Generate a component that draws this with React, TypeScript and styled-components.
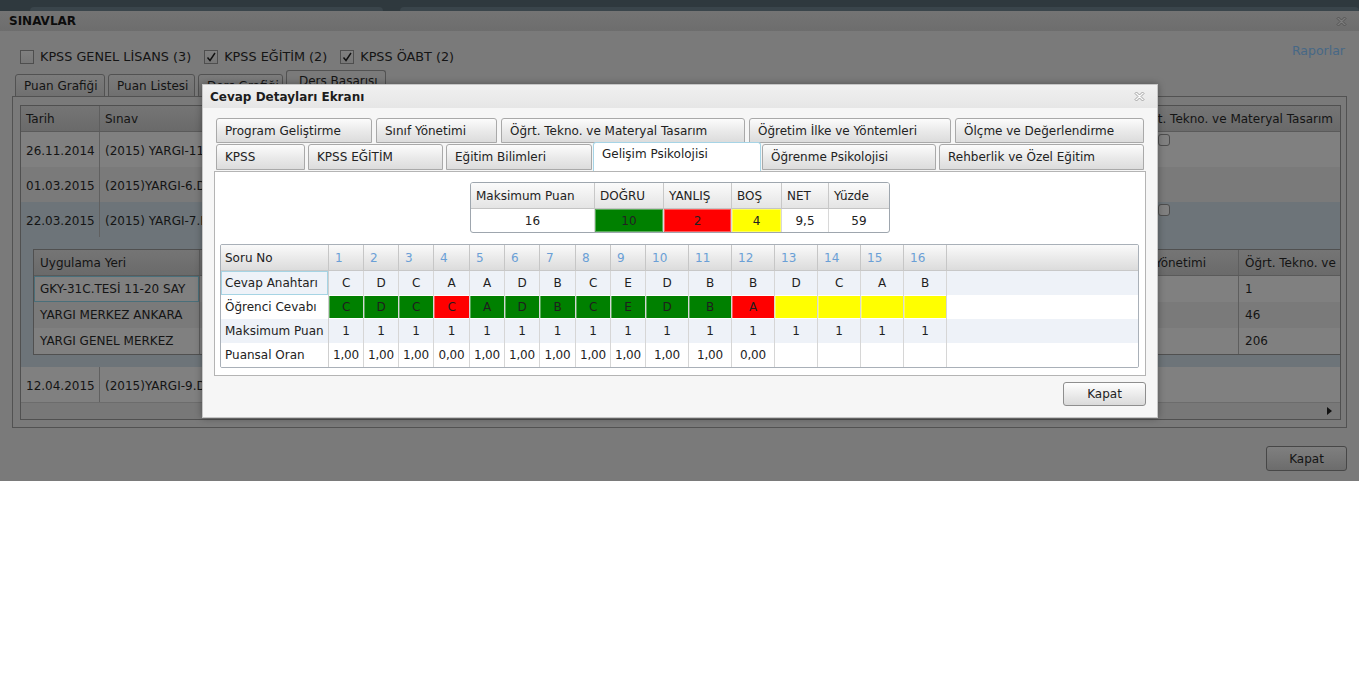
import React from "react";
import styled, { createGlobalStyle, css } from "styled-components";

const GlobalStyle = createGlobalStyle`
  * { box-sizing: border-box; }
  html, body { margin: 0; padding: 0; background: #fff; }
  body {
    font-family: "DejaVu Sans", Verdana, sans-serif;
    font-size: 12px;
    color: #222;
  }
`;

// colours of the page while it is dimmed behind the modal dialog
const dim = {
  strip: "#2f393e",
  stripPiece: "#3a454b",
  window: "#7a7a7a",
  text: "#141414",
  border: "#525252",
  line: "#606060",
  headTop: "#757575",
  headBottom: "#6a6a6a",
  row: "#808080",
  rowAlt: "#7a7a7a",
  rowSel: "#6d7479",
  link: "#476886",
  focus: "#4a6f7a",
};

// ---------- shared bits ----------

const XIcon = ({ dimmed }: { dimmed?: boolean }) => (
  <svg width="11" height="11" viewBox="0 0 11 11">
    <path
      d="M1 2.5 L2.5 1 L5.5 4 L8.5 1 L10 2.5 L7 5.5 L10 8.5 L8.5 10 L5.5 7 L2.5 10 L1 8.5 L4 5.5 Z"
      fill={dimmed ? "#7c7c7c" : "#fafafa"}
      stroke={dimmed ? "#555" : "#a2a2a2"}
      strokeWidth="1"
    />
  </svg>
);

const Button = styled.button<{ $dim?: boolean }>`
  width: ${(p) => (p.$dim ? 81 : 83)}px;
  height: ${(p) => (p.$dim ? 25 : 24)}px;
  padding: 0;
  border: 1px solid ${(p) => (p.$dim ? "#474747" : "#8e8e8e")};
  border-radius: 3px;
  background: ${(p) =>
    p.$dim
      ? "linear-gradient(#7f7f7f, #767676 50%, #6c6c6c)"
      : "linear-gradient(#fefefe, #ececec 50%, #dadada)"};
  font: 12px "DejaVu Sans", Verdana, sans-serif;
  color: ${(p) => (p.$dim ? dim.text : "#222")};
`;

// ---------- page behind the dialog ----------

const Screen = styled.div`
  position: relative;
  height: 481px;
  background: ${dim.strip};
  overflow: hidden;
`;

const TopStrip = styled.div`
  height: 11px;
  display: flex;
  align-items: flex-end;
  gap: 17px;
  padding-left: 30px;
`;

const TopPiece = styled.div<{ $grow?: boolean }>`
  height: 4px;
  width: 353px;
  ${(p) => p.$grow && "flex: 1;"}
  border-radius: 6px 6px 0 0;
  background: ${dim.stripPiece};
`;

const Window = styled.section`
  height: 470px;
  background: ${dim.window};
  color: ${dim.text};
  display: flex;
  flex-direction: column;
`;

const WindowHeader = styled.header`
  height: 20px;
  flex: none;
  display: flex;
  align-items: center;
  justify-content: space-between;
  padding: 0 12px 0 9px;
  background: linear-gradient(#747474, #6d6d6d);
  font-weight: bold;
  color: #0c0c0c;
`;

const FilterRow = styled.div`
  height: 40px;
  flex: none;
  display: flex;
  justify-content: space-between;
  align-items: flex-start;
  padding: 0 14px 0 20px;
`;

const FilterGroup = styled.div`
  margin-top: 18px;
  display: flex;
  align-items: center;
  gap: 13px;
`;

const FilterItem = styled.label`
  display: flex;
  align-items: center;
  gap: 6px;
  font-size: 12.8px;
`;

const Box = styled.span`
  width: 14px;
  height: 14px;
  border: 1px solid #4e4e4e;
  background: linear-gradient(#808080, #777);
  display: flex;
  align-items: center;
  justify-content: center;
`;

const ReportLink = styled.a`
  margin-top: 12px;
  color: ${dim.link};
  text-decoration: none;
  font-size: 12.5px;
`;

const Check = ({ on }: { on?: boolean }) => (
  <Box>
    {on && (
      <svg width="12" height="12" viewBox="0 0 12 12">
        <path d="M2.5 6.5 L5 9.5 L10 2" fill="none" stroke="#111" strokeWidth="1.4" />
      </svg>
    )}
  </Box>
);

const BgTabBar = styled.div`
  height: 26px;
  flex: none;
  display: flex;
  align-items: flex-end;
  gap: 3px;
  padding-left: 15px;
  margin-bottom: -1px;
  position: relative;
  z-index: 1;
`;

const BgTab = styled.div<{ $w: number; $active?: boolean }>`
  width: ${(p) => p.$w}px;
  height: ${(p) => (p.$active ? 27 : 23)}px;
  display: flex;
  align-items: ${(p) => (p.$active ? "flex-start" : "center")};
  padding: ${(p) => (p.$active ? "3px 0 0 12px" : "0 0 0 8px")};
  border: 1px solid ${dim.border};
  border-bottom: ${(p) => (p.$active ? "none" : `1px solid ${dim.border}`)};
  border-radius: 3px 3px 0 0;
  background: ${(p) => (p.$active ? dim.window : "linear-gradient(#7c7c7c, #707070)")};
  white-space: nowrap;
`;

const BgPanel = styled.div`
  height: 332px;
  flex: none;
  margin: 0 12px;
  border: 1px solid ${dim.border};
  padding: 8px 5px 7px 7px;
`;

const MainGrid = styled.div`
  height: 100%;
  border: 1px solid #505050;
  background: ${dim.row};
  overflow: hidden;
  display: flex;
  flex-direction: column;
`;

const mainCols = "79px 1fr 188px";

const MainHead = styled.div`
  height: 26px;
  flex: none;
  display: grid;
  grid-template-columns: ${mainCols};
  background: linear-gradient(${dim.headTop}, ${dim.headBottom});
  border-bottom: 1px solid #5a5a5a;
`;

const HeadCell = styled.div<{ $end?: boolean }>`
  display: flex;
  align-items: center;
  justify-content: ${(p) => (p.$end ? "flex-end" : "flex-start")};
  padding: ${(p) => (p.$end ? "0 7px 0 0" : "0 0 0 5px")};
  border-right: 1px solid #5e5e5e;
  white-space: nowrap;
  overflow: hidden;
  &:last-child { border-right: none; }
`;

const MainRow = styled.div<{ $bg: string }>`
  height: 35px;
  flex: none;
  display: grid;
  grid-template-columns: ${mainCols};
  background: ${(p) => p.$bg};
`;

const RowCell = styled.div<{ $top?: boolean }>`
  display: flex;
  align-items: ${(p) => (p.$top ? "flex-start" : "center")};
  padding: ${(p) => (p.$top ? "2px 0 0 6px" : "2px 0 0 5px")};
  white-space: nowrap;
  overflow: hidden;
  &:first-child { border-right: 1px solid ${dim.line}; }
`;

const RoundBox = styled.span`
  width: 12px;
  height: 12px;
  border: 1px solid #4d4d4d;
  border-radius: 3px;
  background: #808080;
`;

const DetailArea = styled.div`
  flex: none;
  height: 130px;
  padding: 12px 0 0 12px;
  background: ${dim.rowSel};
`;

const detailCols = "166px 919px 120px 125px";

const DetailGrid = styled.div`
  width: 1330px;
  border: 1px solid #505050;
  background: ${dim.row};
`;

const DetailHead = styled.div`
  height: 26px;
  display: grid;
  grid-template-columns: ${detailCols};
  background: linear-gradient(${dim.headTop}, ${dim.headBottom});
  border-bottom: 1px solid #5a5a5a;
`;

const DetailRow = styled.div<{ $bg: string }>`
  height: 26px;
  display: grid;
  grid-template-columns: ${detailCols};
  background: ${(p) => p.$bg};
`;

const DetailCell = styled.div<{ $focus?: boolean }>`
  display: flex;
  align-items: center;
  padding-left: 6px;
  white-space: nowrap;
  overflow: hidden;
  border-right: 1px solid #5e5e5e;
  ${(p) => p.$focus && `box-shadow: inset 0 0 0 1px ${dim.focus};`}
  &:nth-child(2) { border-right: none; }
`;

const HScroll = styled.div`
  margin-top: auto;
  height: 17px;
  flex: none;
  background: #787878;
  border-top: 1px solid #6c6c6c;
  display: flex;
  align-items: center;
  justify-content: flex-end;
  padding-right: 8px;
`;

const ArrowRight = styled.span`
  width: 0;
  height: 0;
  border-top: 4px solid transparent;
  border-bottom: 4px solid transparent;
  border-left: 5px solid #111;
`;

const WindowFooter = styled.div`
  display: flex;
  justify-content: flex-end;
  padding: 18px 12px 0 0;
`;

// ---------- dialog ----------

const Dialog = styled.div`
  position: absolute;
  left: 202px;
  top: 84px;
  z-index: 11;
  width: 956px;
  background: #f6f6f6;
  border: 1px solid #c6c6c6;
  box-shadow: 0 0 7px rgba(0, 0, 0, 0.35);
`;

const DialogHeader = styled.header`
  height: 23px;
  display: flex;
  align-items: center;
  justify-content: space-between;
  padding: 0 12px 0 7px;
  background: linear-gradient(#f0f0f0, #e6e6e6);
  font-weight: bold;
  color: #1c1c1c;
`;

const DialogBody = styled.div`
  padding: 10px 11px 11px 11px;
`;

const TabRow = styled.div<{ $h: number; $gap: number }>`
  height: ${(p) => p.$h}px;
  display: flex;
  align-items: flex-end;
  gap: ${(p) => p.$gap}px;
  padding-left: 2px;
  margin-bottom: 1px;
  &:last-of-type { margin-bottom: 0; }
`;

const Tab = styled.div<{ $w: number; $active?: boolean }>`
  width: ${(p) => p.$w}px;
  height: 100%;
  flex: none;
  display: flex;
  align-items: center;
  padding-left: 8px;
  border: 1px solid #a9a9a9;
  border-radius: 3px 3px 0 0;
  background: linear-gradient(#fcfcfc, #e9e9e9 55%, #dcdcdc);
  color: #222;
  white-space: nowrap;
  ${(p) =>
    p.$active &&
    css`
      height: 29px;
      margin: 0 -2px -1px -2px;
      align-items: flex-start;
      padding-top: 4px;
      background: #fff;
      border-color: #a6d4e6;
      border-bottom: none;
      position: relative;
      z-index: 2;
    `}
`;

const TabPanel = styled.div`
  height: 205px;
  background: #fff;
  border: 1px solid #b4b4b4;
  display: flex;
  flex-direction: column;
  align-items: center;
`;

const SummaryTable = styled.div`
  margin-top: 10px;
  display: grid;
  grid-template-columns: 124px 69px 68px 50px 47px 60px;
  grid-template-rows: 26px 23px;
  border: 1px solid #9ea6ae;
  border-radius: 3px;
  overflow: hidden;
`;

const SumHead = styled.div`
  display: flex;
  align-items: center;
  padding-left: 5px;
  background: linear-gradient(#fbfbfb, #e4e4e4);
  border-right: 1px solid #c8c8c8;
  border-bottom: 1px solid #c4c4c4;
  &:nth-child(6) { border-right: none; }
`;

type Tone = "green" | "red" | "yellow" | undefined;
const toneBg = (t: Tone) =>
  t === "green" ? "#008000" : t === "red" ? "#ff0000" : t === "yellow" ? "#ffff00" : "transparent";

const SumCell = styled.div<{ $tone?: Tone }>`
  display: flex;
  align-items: center;
  justify-content: center;
  background: ${(p) => toneBg(p.$tone)};
  border-right: 1px solid #d8d8d8;
  ${(p) => p.$tone && "box-shadow: inset 0 0 0 1px rgba(255,255,255,0.35);"}
  &:last-child { border-right: none; }
`;

const answerCols =
  "108px 35px 35px 35px 36px 35px 35px 36px 35px 35px 43px 43px 43px 43px 43px 43px 43px 1fr";

const AnswerGrid = styled.div`
  align-self: stretch;
  margin: 11px 6px 0 5px;
  border: 1px solid #a9b0b8;
  border-radius: 2px;
  overflow: hidden;
`;

const AnswerHead = styled.div`
  height: 26px;
  display: grid;
  grid-template-columns: ${answerCols};
  background: linear-gradient(#fafafa, #e9e9e9 55%, #dcdcdc);
  border-bottom: 1px solid #c8c8c8;
`;

const AHeadCell = styled.div<{ $num?: boolean }>`
  display: flex;
  align-items: center;
  padding-left: ${(p) => (p.$num ? 6 : 4)}px;
  color: ${(p) => (p.$num ? "#6a9fd6" : "#222")};
  border-right: 1px solid #c6c6c6;
  &:last-child { border-right: none; }
`;

const AnswerRow = styled.div<{ $alt?: boolean }>`
  height: 24px;
  display: grid;
  grid-template-columns: ${answerCols};
  background: ${(p) => (p.$alt ? "#eef2f8" : "#fff")};
`;

const ALabel = styled.div<{ $focus?: boolean }>`
  display: flex;
  align-items: center;
  padding-left: 4px;
  white-space: nowrap;
  border-right: 1px solid #cfcfcf;
  ${(p) => p.$focus && "box-shadow: inset 0 0 0 1px #a6d4e4;"}
`;

const ACell = styled.div<{ $tone?: Tone }>`
  display: flex;
  align-items: center;
  justify-content: center;
  white-space: nowrap;
  letter-spacing: -0.2px;
  background: ${(p) => toneBg(p.$tone)};
  border-right: 1px solid #d6d6d6;
  color: #1e1e1e;
  ${(p) => p.$tone && "box-shadow: inset 0 1px 0 #fff, inset 0 -1px 0 #fff, inset 1px 0 0 rgba(255,255,255,0.35);"}
  &:last-child { border-right: none; }
`;

const DialogFooter = styled.div`
  display: flex;
  justify-content: flex-end;
  padding-top: 6px;
`;

// ---------- data ----------

const row1Tabs: [string, number][] = [
  ["Program Geliştirme", 156],
  ["Sınıf Yönetimi", 121],
  ["Öğrt. Tekno. ve Materyal Tasarım", 244],
  ["Öğretim İlke ve Yöntemleri", 202],
  ["Ölçme ve Değerlendirme", 189],
];

const row2Tabs: [string, number][] = [
  ["KPSS", 89],
  ["KPSS EĞİTİM", 135],
  ["Eğitim Bilimleri", 146],
  ["Gelişim Psikolojisi", 168],
  ["Öğrenme Psikolojisi", 174],
  ["Rehberlik ve Özel Eğitim", 205],
];

const summary: { label: string; value: string; tone?: Tone }[] = [
  { label: "Maksimum Puan", value: "16" },
  { label: "DOĞRU", value: "10", tone: "green" },
  { label: "YANLIŞ", value: "2", tone: "red" },
  { label: "BOŞ", value: "4", tone: "yellow" },
  { label: "NET", value: "9,5" },
  { label: "Yüzde", value: "59" },
];

const key = ["C", "D", "C", "A", "A", "D", "B", "C", "E", "D", "B", "B", "D", "C", "A", "B"];
const given = ["C", "D", "C", "C", "A", "D", "B", "C", "E", "D", "B", "A", "", "", "", ""];
const scores = ["1,00", "1,00", "1,00", "0,00", "1,00", "1,00", "1,00", "1,00", "1,00", "1,00", "1,00", "0,00", "", "", "", ""];

const toneOf = (i: number): Tone => (given[i] === "" ? "yellow" : given[i] === key[i] ? "green" : "red");

const exams = [
  { date: "26.11.2014", name: "(2015) YARGI-11.DENEME SINAVI", bg: dim.row, box: true },
  { date: "01.03.2015", name: "(2015)YARGI-6.DENEME SINAVI", bg: dim.rowAlt },
  { date: "22.03.2015", name: "(2015) YARGI-7.DENEME SINAVI", bg: dim.rowSel, box: true, open: true },
  { date: "12.04.2015", name: "(2015)YARGI-9.DENEME SINAVI", bg: dim.row },
];

const places = [
  { name: "GKY-31C.TESİ 11-20 SAY", value: "1", bg: dim.row },
  { name: "YARGI MERKEZ ANKARA", value: "46", bg: dim.rowAlt },
  { name: "YARGI GENEL MERKEZ", value: "206", bg: dim.row },
];

// ---------- component ----------

export default function App() {
  return (
    <>
      <GlobalStyle />
      <Screen>
        <TopStrip>
          <TopPiece />
          <TopPiece $grow />
        </TopStrip>
        <Window>
          <WindowHeader>
            <span>SINAVLAR</span>
            <XIcon dimmed />
          </WindowHeader>
          <FilterRow>
            <FilterGroup>
              <FilterItem>
                <Check />
                KPSS GENEL LİSANS (3)
              </FilterItem>
              <FilterItem>
                <Check on />
                KPSS EĞİTİM (2)
              </FilterItem>
              <FilterItem>
                <Check on />
                KPSS ÖABT (2)
              </FilterItem>
            </FilterGroup>
            <ReportLink>Raporlar</ReportLink>
          </FilterRow>
          <BgTabBar>
            <BgTab $w={90}>Puan Grafiği</BgTab>
            <BgTab $w={87}>Puan Listesi</BgTab>
            <BgTab $w={85}>Ders Grafiği</BgTab>
            <BgTab $w={100} $active>
              Ders Başarısı
            </BgTab>
          </BgTabBar>
          <BgPanel>
            <MainGrid>
              <MainHead>
                <HeadCell>Tarih</HeadCell>
                <HeadCell>Sınav</HeadCell>
                <HeadCell $end>Öğrt. Tekno. ve Materyal Tasarım</HeadCell>
              </MainHead>
              {exams.map((e) => (
                <React.Fragment key={e.date}>
                  <MainRow $bg={e.bg}>
                    <RowCell>{e.date}</RowCell>
                    <RowCell>{e.name}</RowCell>
                    <RowCell $top>{e.box && <RoundBox />}</RowCell>
                  </MainRow>
                  {e.open && (
                    <DetailArea>
                      <DetailGrid>
                        <DetailHead>
                          <DetailCell>Uygulama Yeri</DetailCell>
                          <DetailCell>Katılımcı</DetailCell>
                          <DetailCell>Sınıf Yönetimi</DetailCell>
                          <DetailCell>Öğrt. Tekno. ve Materyal Tasarım</DetailCell>
                        </DetailHead>
                        {places.map((p, i) => (
                          <DetailRow key={p.name} $bg={p.bg}>
                            <DetailCell $focus={i === 0}>{p.name}</DetailCell>
                            <DetailCell />
                            <DetailCell />
                            <DetailCell>{p.value}</DetailCell>
                          </DetailRow>
                        ))}
                      </DetailGrid>
                    </DetailArea>
                  )}
                </React.Fragment>
              ))}
              <HScroll>
                <ArrowRight />
              </HScroll>
            </MainGrid>
          </BgPanel>
          <WindowFooter>
            <Button $dim>Kapat</Button>
          </WindowFooter>
        </Window>

        <Dialog>
          <DialogHeader>
            <span>Cevap Detayları Ekranı</span>
            <XIcon />
          </DialogHeader>
          <DialogBody>
            <TabRow $h={25} $gap={4}>
              {row1Tabs.map(([t, w]) => (
                <Tab key={t} $w={w}>
                  {t}
                </Tab>
              ))}
            </TabRow>
            <TabRow $h={26} $gap={3}>
              {row2Tabs.map(([t, w]) => (
                <Tab key={t} $w={w} $active={t === "Gelişim Psikolojisi"}>
                  {t}
                </Tab>
              ))}
            </TabRow>
            <TabPanel>
              <SummaryTable>
                {summary.map((s) => (
                  <SumHead key={s.label}>{s.label}</SumHead>
                ))}
                {summary.map((s) => (
                  <SumCell key={s.label} $tone={s.tone}>
                    {s.value}
                  </SumCell>
                ))}
              </SummaryTable>
              <AnswerGrid>
                <AnswerHead>
                  <AHeadCell>Soru No</AHeadCell>
                  {key.map((_, i) => (
                    <AHeadCell key={i} $num>
                      {i + 1}
                    </AHeadCell>
                  ))}
                  <AHeadCell />
                </AnswerHead>
                <AnswerRow $alt>
                  <ALabel $focus>Cevap Anahtarı</ALabel>
                  {key.map((k, i) => (
                    <ACell key={i}>{k}</ACell>
                  ))}
                  <ACell />
                </AnswerRow>
                <AnswerRow>
                  <ALabel>Öğrenci Cevabı</ALabel>
                  {given.map((g, i) => (
                    <ACell key={i} $tone={toneOf(i)}>
                      {g}
                    </ACell>
                  ))}
                  <ACell />
                </AnswerRow>
                <AnswerRow $alt>
                  <ALabel>Maksimum Puan</ALabel>
                  {key.map((_, i) => (
                    <ACell key={i}>1</ACell>
                  ))}
                  <ACell />
                </AnswerRow>
                <AnswerRow>
                  <ALabel>Puansal Oran</ALabel>
                  {scores.map((s, i) => (
                    <ACell key={i}>{s}</ACell>
                  ))}
                  <ACell />
                </AnswerRow>
              </AnswerGrid>
            </TabPanel>
            <DialogFooter>
              <Button>Kapat</Button>
            </DialogFooter>
          </DialogBody>
        </Dialog>
      </Screen>
    </>
  );
}
